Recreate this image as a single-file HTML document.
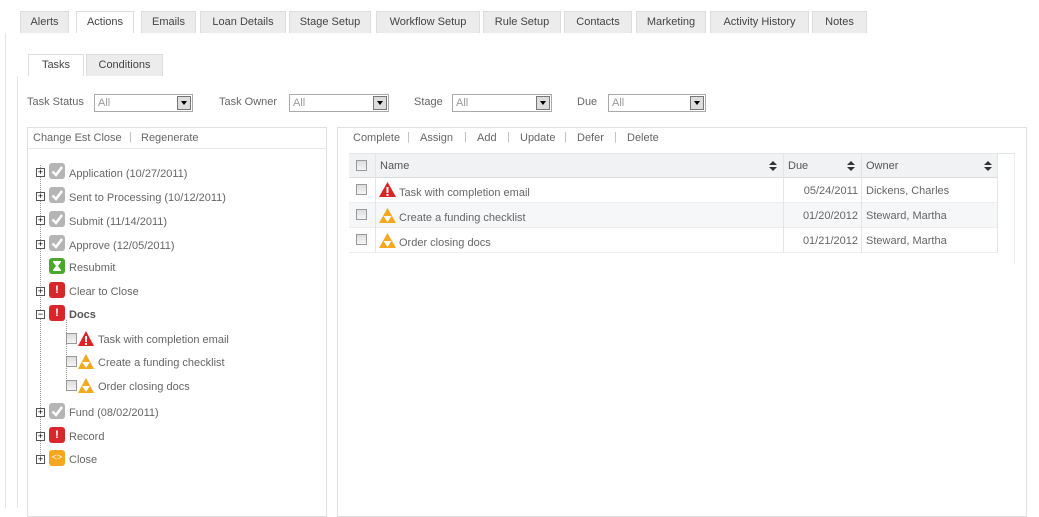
<!DOCTYPE html>
<html><head><style>
*{margin:0;padding:0;box-sizing:border-box}
body{width:1039px;height:508px;background:#fff;font-family:"Liberation Sans",Arial,sans-serif;font-size:11px;color:#666;position:relative;overflow:hidden}
.a{position:absolute;white-space:nowrap}
span{white-space:nowrap}
.tab{position:absolute;top:11px;height:22px;background:#ececec;border:1px solid #ddd;border-bottom:none;font-size:11px;color:#444;text-align:center;line-height:21px}
.tab.on{background:#fff}
.sel{position:absolute;top:94px;height:18px;border:1px solid #aaa;background:#fff;color:#999;padding-left:3px;line-height:16px}
.sel i{position:absolute;right:1px;top:1px;width:14px;height:14px;border:1px solid #777;background:#ddd}
.sel i:after{content:"";position:absolute;left:3px;top:4px;border:3px solid transparent;border-top:4px solid #000}
.lbl{position:absolute;top:96px;color:#666}
.tr{position:absolute;left:0;width:320px;height:20px;line-height:20px}
.pb{position:absolute;width:9px;height:9px;border:1px solid #555;background:#fff;font-size:9px;line-height:7px;text-align:center;color:#000}
.ic{position:absolute;width:16px;height:16px;border-radius:3px}
.chk{position:absolute;width:11px;height:11px;border:1px solid #999;background:linear-gradient(#ddd,#f5f5f5)}
.row{position:absolute;left:349px;width:649px;height:25px;border-bottom:1px solid #eee}
.sort{position:absolute;top:161px}
</style></head><body>
<div class="a" style="left:5px;top:33px;width:1px;height:475px;background:#e5e5e5"></div>
<div class="tab" style="left:20px;width:49px">Alerts</div>
<div class="tab on" style="left:76px;width:58px">Actions</div>
<div class="tab" style="left:141px;width:55px">Emails</div>
<div class="tab" style="left:200px;width:86px">Loan Details</div>
<div class="tab" style="left:289px;width:82px">Stage Setup</div>
<div class="tab" style="left:376px;width:104px">Workflow Setup</div>
<div class="tab" style="left:483px;width:78px">Rule Setup</div>
<div class="tab" style="left:564px;width:68px">Contacts</div>
<div class="tab" style="left:636px;width:70px">Marketing</div>
<div class="tab" style="left:710px;width:99px">Activity History</div>
<div class="tab" style="left:812px;width:55px">Notes</div>
<div class="a" style="left:17px;top:76px;width:1px;height:432px;background:#e5e5e5"></div>
<div class="tab on" style="left:28px;top:54px;width:56px;height:22px">Tasks</div>
<div class="tab" style="left:86px;top:54px;width:77px;height:22px">Conditions</div>
<div class="lbl" style="left:27px">Task Status</div><div class="sel" style="left:94px;width:99px">All<i></i></div>
<div class="lbl" style="left:219px">Task Owner</div><div class="sel" style="left:289px;width:100px">All<i></i></div>
<div class="lbl" style="left:414px">Stage</div><div class="sel" style="left:452px;width:100px">All<i></i></div>
<div class="lbl" style="left:577px">Due</div><div class="sel" style="left:608px;width:98px">All<i></i></div>
<div class="a" style="left:27px;top:127px;width:300px;height:390px;border:1px solid #e0e0e0"></div>
<div class="a" style="left:28px;top:148px;width:298px;height:1px;background:#e8e8e8"></div>
<div class="a" style="left:33px;top:132px">Change Est Close</div><div class="a" style="left:129px;top:131px;color:#bbb">|</div><div class="a" style="left:141px;top:132px">Regenerate</div>
<div class="a" style="left:40px;top:165px;width:0;height:295px;border-left:1px dotted #999"></div>
<div class="a" style="left:66px;top:320px;width:0;height:67px;border-left:1px dotted #999"></div>
<svg width="0" height="0" style="position:absolute"><defs>
<g id="ck"><rect width="16" height="16" rx="3" fill="#b5b5b5"/><path d="M3.5 8.5L7 12L13 4" stroke="#fff" stroke-width="2.5" fill="none"/></g>
</defs></svg>
<div class="tr" style="top:163px"><div class="pb" style="left:36px;top:5px">+</div><svg style="position:absolute;left:49px;top:0" width="16" height="16"><use href="#ck"/></svg><span style="position:absolute;left:69px;top:1px">Application (10/27/2011)</span></div>
<div class="tr" style="top:187px"><div class="pb" style="left:36px;top:5px">+</div><svg style="position:absolute;left:49px;top:0" width="16" height="16"><use href="#ck"/></svg><span style="position:absolute;left:69px;top:1px">Sent to Processing (10/12/2011)</span></div>
<div class="tr" style="top:211px"><div class="pb" style="left:36px;top:5px">+</div><svg style="position:absolute;left:49px;top:0" width="16" height="16"><use href="#ck"/></svg><span style="position:absolute;left:69px;top:1px">Submit (11/14/2011)</span></div>
<div class="tr" style="top:235px"><div class="pb" style="left:36px;top:5px">+</div><svg style="position:absolute;left:49px;top:0" width="16" height="16"><use href="#ck"/></svg><span style="position:absolute;left:69px;top:1px">Approve (12/05/2011)</span></div>
<div class="tr" style="top:258px"><svg style="position:absolute;left:49px;top:0" width="16" height="16"><rect width="16" height="16" rx="3" fill="#4aa82e"/><path d="M4 3H12V4L9 8L12 12V13H4V12L7 8L4 4Z" fill="#fff"/></svg><span style="position:absolute;left:69px;top:0">Resubmit</span></div>
<div class="tr" style="top:282px"><div class="pb" style="left:36px;top:5px">+</div><div class="ic" style="left:49px;top:0;background:#d8262b;color:#fff;font-weight:bold;text-align:center;line-height:16px">!</div><span style="position:absolute;left:69px;top:0">Clear to Close</span></div>
<div class="tr" style="top:305px"><div class="pb" style="left:36px;top:5px">−</div><div class="ic" style="left:49px;top:0;background:#d8262b;color:#fff;font-weight:bold;text-align:center;line-height:16px">!</div><span style="position:absolute;left:69px;top:0;font-weight:bold;color:#555">Docs</span></div>
<div class="tr" style="top:330px"><div class="chk" style="left:66px;top:3px"></div><svg style="position:absolute;left:78px;top:1px" width="16" height="16"><path d="M8 0L16 15H0Z" fill="#d22"/><rect x="7" y="5" width="2" height="6" fill="#fff"/><rect x="7" y="12" width="2" height="2" fill="#fff"/></svg><span style="position:absolute;left:98px;top:0">Task with completion email</span></div>
<div class="tr" style="top:353px"><div class="chk" style="left:66px;top:3px"></div><svg style="position:absolute;left:78px;top:1px" width="16" height="16"><path d="M8 0L16 15H0Z" fill="#f3a81d"/><path d="M4 8H12L8 14Z" fill="#fff"/></svg><span style="position:absolute;left:98px;top:0">Create a funding checklist</span></div>
<div class="tr" style="top:377px"><div class="chk" style="left:66px;top:3px"></div><svg style="position:absolute;left:78px;top:1px" width="16" height="16"><path d="M8 0L16 15H0Z" fill="#f3a81d"/><path d="M4 8H12L8 14Z" fill="#fff"/></svg><span style="position:absolute;left:98px;top:0">Order closing docs</span></div>
<div class="tr" style="top:403px"><div class="pb" style="left:36px;top:5px">+</div><svg style="position:absolute;left:49px;top:0" width="16" height="16"><use href="#ck"/></svg><span style="position:absolute;left:69px;top:0">Fund (08/02/2011)</span></div>
<div class="tr" style="top:427px"><div class="pb" style="left:36px;top:5px">+</div><div class="ic" style="left:49px;top:0;background:#d8262b;color:#fff;font-weight:bold;text-align:center;line-height:16px">!</div><span style="position:absolute;left:69px;top:0">Record</span></div>
<div class="tr" style="top:450px"><div class="pb" style="left:36px;top:5px">+</div><div class="ic" style="left:49px;top:0;background:#f3a81d;color:#fff;font-size:9px;text-align:center;line-height:15px">&lt;&gt;</div><span style="position:absolute;left:69px;top:0">Close</span></div>
<div class="a" style="left:337px;top:127px;width:690px;height:390px;border:1px solid #e0e0e0"></div>
<div class="a" style="left:353px;top:132px">Complete</div><div class="a" style="left:407px;top:131px;color:#bbb">|</div>
<div class="a" style="left:420px;top:132px">Assign</div><div class="a" style="left:464px;top:131px;color:#bbb">|</div>
<div class="a" style="left:477px;top:132px">Add</div><div class="a" style="left:507px;top:131px;color:#bbb">|</div>
<div class="a" style="left:520px;top:132px">Update</div><div class="a" style="left:564px;top:131px;color:#bbb">|</div>
<div class="a" style="left:577px;top:132px">Defer</div><div class="a" style="left:614px;top:131px;color:#bbb">|</div>
<div class="a" style="left:627px;top:132px">Delete</div>
<div class="a" style="left:349px;top:153px;width:666px;height:1px;background:#e5e5e5"></div>
<div class="a" style="left:349px;top:154px;width:649px;height:24px;background:#f0f2f3;border-bottom:1px solid #ddd"></div>
<div class="a" style="left:1014px;top:154px;width:1px;height:110px;background:#eee"></div>
<div class="chk" style="left:356px;top:160px"></div>
<div class="a" style="left:380px;top:160px;color:#555">Name</div>
<svg class="sort" style="left:769px" width="8" height="10"><path d="M4 0L8 4H0ZM0 6H8L4 10Z" fill="#333"/></svg>
<div class="a" style="left:788px;top:160px;color:#555">Due</div>
<svg class="sort" style="left:847px" width="8" height="10"><path d="M4 0L8 4H0ZM0 6H8L4 10Z" fill="#333"/></svg>
<div class="a" style="left:866px;top:160px;color:#555">Owner</div>
<svg class="sort" style="left:984px" width="8" height="10"><path d="M4 0L8 4H0ZM0 6H8L4 10Z" fill="#333"/></svg>
<div class="row" style="top:178px"></div>
<div class="row" style="top:203px;background:#f5f7f8"></div>
<div class="row" style="top:228px"></div>
<div class="a" style="left:375px;top:154px;width:1px;height:99px;background:#e5e5e5"></div>
<div class="a" style="left:783px;top:154px;width:1px;height:99px;background:#e5e5e5"></div>
<div class="a" style="left:861px;top:154px;width:1px;height:99px;background:#e5e5e5"></div>
<div class="a" style="left:997px;top:154px;width:1px;height:99px;background:#e5e5e5"></div>
<div class="chk" style="left:356px;top:184px"></div><div class="chk" style="left:356px;top:209px"></div><div class="chk" style="left:356px;top:234px"></div>
<svg class="a" style="left:379px;top:182px" width="17" height="16"><path d="M8.5 0L17 15H0Z" fill="#d22"/><rect x="7.5" y="5" width="2" height="6" fill="#fff"/><rect x="7.5" y="12" width="2" height="2" fill="#fff"/></svg>
<svg class="a" style="left:379px;top:208px" width="17" height="16"><path d="M8.5 0L17 15H0Z" fill="#f3a81d"/><path d="M4.5 8H12.5L8.5 14Z" fill="#fff"/></svg>
<svg class="a" style="left:379px;top:233px" width="17" height="16"><path d="M8.5 0L17 15H0Z" fill="#f3a81d"/><path d="M4.5 8H12.5L8.5 14Z" fill="#fff"/></svg>
<div class="a" style="left:399px;top:187px">Task with completion email</div>
<div class="a" style="left:399px;top:212px">Create a funding checklist</div>
<div class="a" style="left:399px;top:237px">Order closing docs</div>
<div class="a" style="left:790px;top:185px;width:68px;text-align:right">05/24/2011</div><div class="a" style="left:866px;top:185px">Dickens, Charles</div>
<div class="a" style="left:790px;top:210px;width:68px;text-align:right">01/20/2012</div><div class="a" style="left:866px;top:210px">Steward, Martha</div>
<div class="a" style="left:790px;top:235px;width:68px;text-align:right">01/21/2012</div><div class="a" style="left:866px;top:235px">Steward, Martha</div>
</body></html>
